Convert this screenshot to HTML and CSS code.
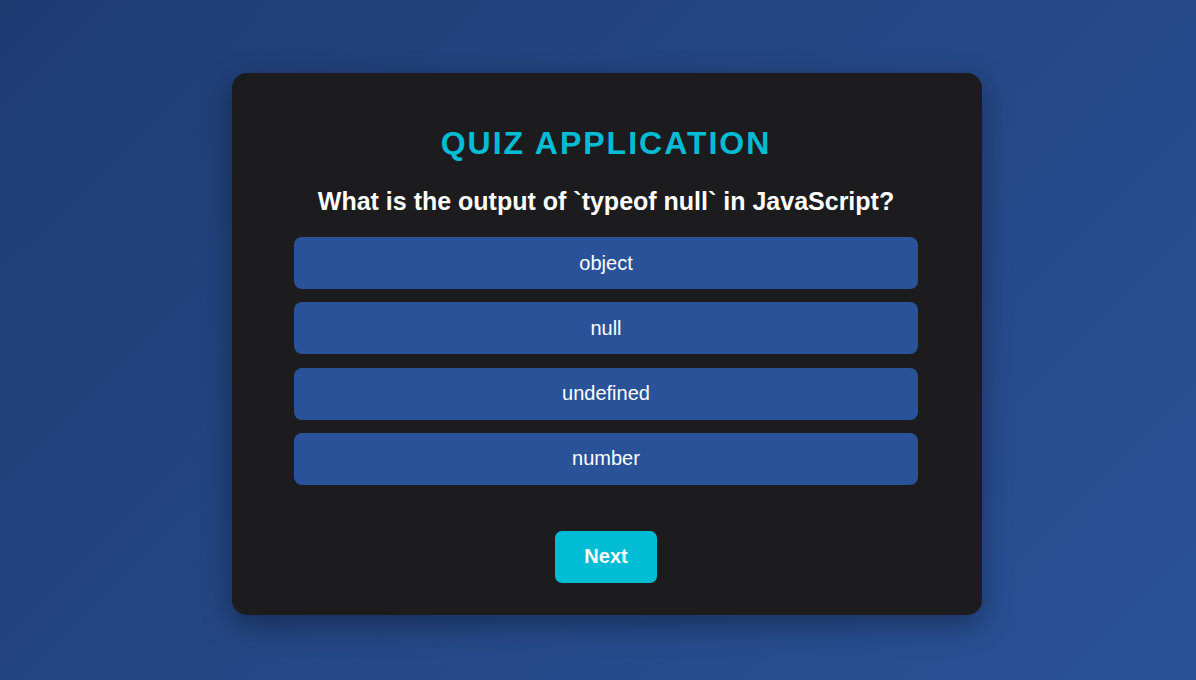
FILE: index.html
```html
<!DOCTYPE html>
<html lang="en">
<head>
<meta charset="utf-8">
<title>Quiz Application</title>
<link rel="stylesheet" href="styles.css">
</head>
<body>
  <main class="quiz-card">
    <h1 class="quiz-title">QUIZ APPLICATION</h1>
    <h2 class="quiz-question">What is the output of `typeof null` in JavaScript?</h2>
    <div class="quiz-options">
      <button class="quiz-option">object</button>
      <button class="quiz-option">null</button>
      <button class="quiz-option">undefined</button>
      <button class="quiz-option">number</button>
    </div>
    <div class="quiz-actions">
      <button class="quiz-next">Next</button>
    </div>
  </main>
</body>
</html>
```
FILE: styles.css
```css
* {
  box-sizing: border-box;
}

html, body {
  margin: 0;
  height: 100%;
}

body {
  min-height: 100vh;
  display: flex;
  align-items: center;
  justify-content: center;
  padding: 8px 0 0 18px;
  background: linear-gradient(135deg, #1e3c72, #2a5298);
  font-family: "Liberation Sans", Arial, Helvetica, sans-serif;
  color: #ffffff;
}

.quiz-card {
  width: 750px;
  background: #1c1c1e;
  border-radius: 15px;
  padding: 30px 64px 32px 62px;
  box-shadow: 0 10px 30px rgba(0, 0, 0, 0.35);
  text-align: center;
}

.quiz-title {
  margin: 22px 0 25px;
  font-size: 32px;
  line-height: 37px;
  font-weight: 700;
  letter-spacing: 2px;
  color: #00bcd4;
}

.quiz-question {
  margin: 0 0 21px;
  font-size: 25px;
  line-height: 29px;
  font-weight: 700;
  color: #ffffff;
}

.quiz-options {
  display: flex;
  flex-direction: column;
  gap: 13.3px;
}

.quiz-option {
  display: flex;
  align-items: center;
  justify-content: center;
  width: 100%;
  height: 52px;
  border: none;
  border-radius: 8px;
  background: #2a5298;
  color: #ffffff;
  font-family: inherit;
  font-size: 20px;
  cursor: pointer;
}

.quiz-actions {
  display: flex;
  justify-content: center;
  margin-top: 46px;
}

.quiz-next {
  width: 102px;
  height: 52px;
  border: none;
  border-radius: 7px;
  background: #00bcd4;
  color: #ffffff;
  font-family: inherit;
  font-size: 20px;
  font-weight: 700;
  cursor: pointer;
}
```
